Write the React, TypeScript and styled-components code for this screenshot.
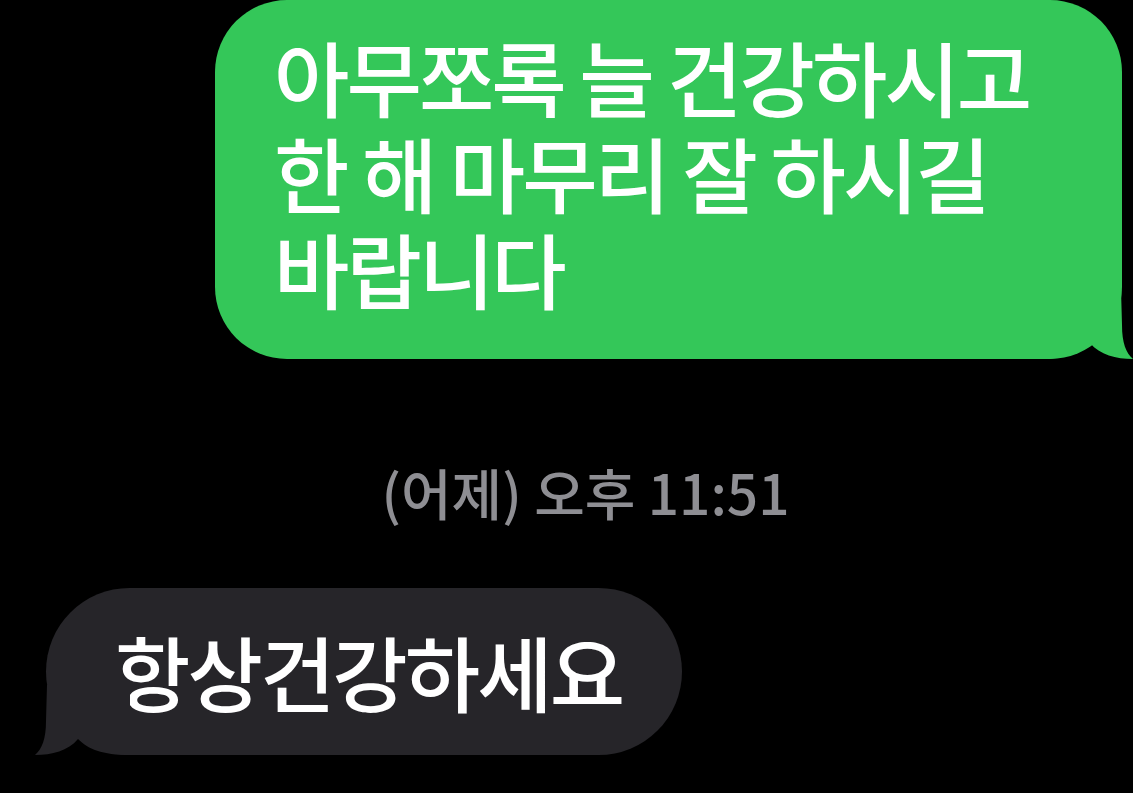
import React from "react";
import styled, { createGlobalStyle } from "styled-components";

const GlobalStyle = createGlobalStyle`
  html, body {
    margin: 0;
    padding: 0;
    background: #000;
  }
  body {
    font-family: "Noto Sans CJK KR", "Noto Sans", "Liberation Sans", sans-serif;
    overflow: hidden;
  }
`;

const Screen = styled.div`
  width: 1133px;
  height: 793px;
  background: #000;
  display: flex;
  flex-direction: column;
  overflow: hidden;
`;

const Bubble = styled.div<{ $sent?: boolean }>`
  position: relative;
  box-sizing: border-box;
  background: ${(p) => (p.$sent ? "#34c759" : "#262529")};
  color: #fff;
  font-size: 82px;
  letter-spacing: -3px;
  font-weight: 500;
`;

const SentBubble = styled(Bubble)`
  align-self: flex-end;
  margin-right: 11px;
  width: 907px;
  height: 359px;
  border-radius: 72px;
  padding: 28px 10px 0 59px;
  line-height: 96px;
`;

const ReceivedBubble = styled(Bubble)`
  align-self: flex-start;
  margin-left: 46px;
  margin-top: 66px;
  width: 636px;
  height: 167px;
  border-radius: 84px;
  padding: 0 0 2px 69px;
  display: flex;
  align-items: center;
  line-height: 96px;
`;

const Line = styled.div`
  white-space: nowrap;
`;

const TimeRow = styled.div`
  display: flex;
  justify-content: center;
  padding-left: 38px;
  margin-top: 101px;
  color: #8e8e93;
  font-size: 55px;
  line-height: 62px;
  font-weight: 500;
`;

const TailSvg = styled.svg<{ $left?: boolean }>`
  position: absolute;
  bottom: 0;
  width: 95px;
  height: 70px;
  ${(p) =>
    p.$left
      ? "left: -11px; transform: scaleX(-1);"
      : "right: -11px;"}
`;

function Tail({ color, left }: { color: string; left?: boolean }) {
  return (
    <TailSvg $left={left} viewBox="0 0 95 70" aria-hidden>
      <path
        d="M0,70 C28,70 42,64 52,54 C62,66 78,70 95,70 C88,64 84,54 84,36 L83,0 L0,0 Z"
        fill={color}
      />
    </TailSvg>
  );
}

export default function App() {
  return (
    <>
      <GlobalStyle />
      <Screen>
        <SentBubble $sent>
          <Line>아무쪼록 늘 건강하시고</Line>
          <Line>한 해 마무리 잘 하시길</Line>
          <Line>바랍니다</Line>
          <Tail color="#34c759" />
        </SentBubble>
        <TimeRow>(어제) 오후 11:51</TimeRow>
        <ReceivedBubble>
          <Line>항상건강하세요</Line>
          <Tail color="#262529" left />
        </ReceivedBubble>
      </Screen>
    </>
  );
}
